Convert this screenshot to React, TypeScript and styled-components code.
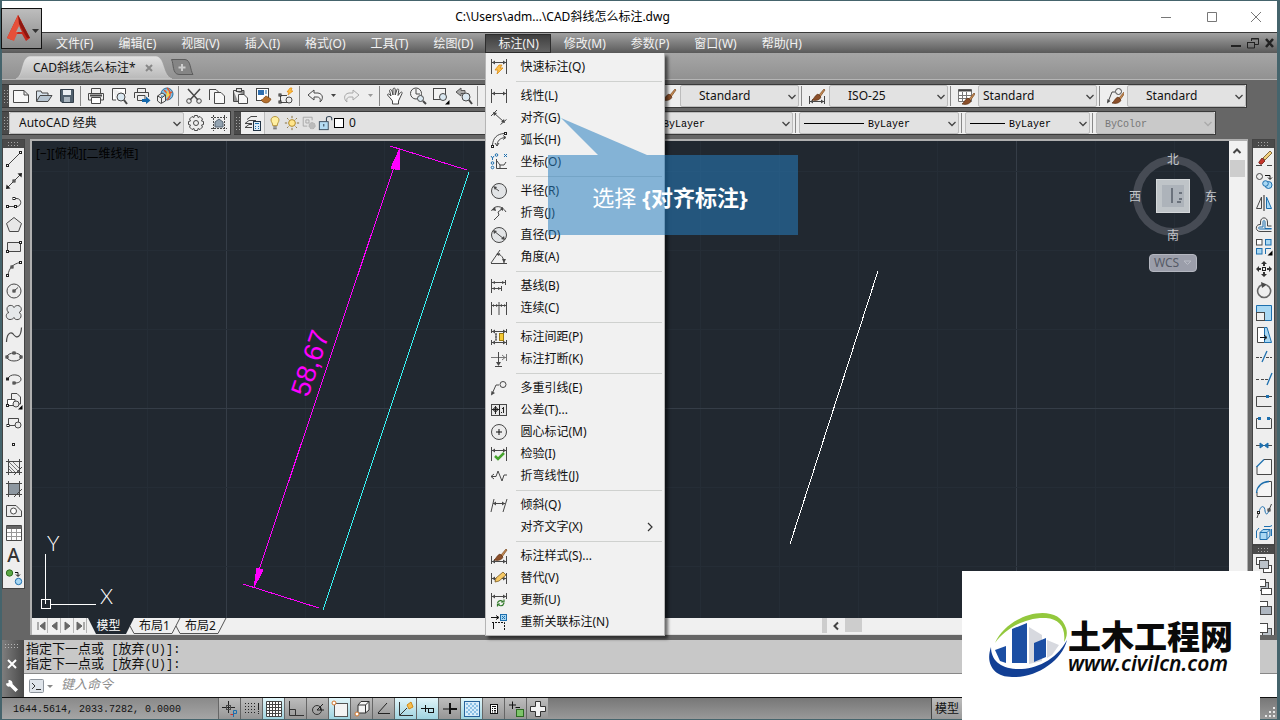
import React from "react";
import type { ReactNode } from "react";
import styled, { createGlobalStyle, css } from "styled-components";

const ui = `"Noto Sans", "Noto Sans CJK SC", sans-serif`;
const mono = `"Liberation Mono", "Noto Sans CJK SC", monospace`;

const GlobalStyle = createGlobalStyle`
  * { box-sizing: border-box; }
  body { margin: 0; background: #666; font: 12px/16px ${ui}; color: #111; }
  button, input, select { font: inherit; color: inherit; margin: 0; }
  button { padding: 0; border: 0; background: none; }
  svg { display: block; flex: none; }
`;

/* ---------- icons ---------- */

const K = "#484848";
const B = "#1d6fae";
const LB = "#a9d8f3";

const Svg = ({ children, size = 18 }: { children: ReactNode; size?: number }) => (
  <svg width={size} height={size} viewBox="0 0 18 18" fill="none" stroke={K} strokeWidth="1" aria-hidden="true">
    {children}
  </svg>
);

const arrows = (y: number, l = 2, r = 16) => (
  <path d={`M${l} ${y}L${l + 3} ${y - 2}V${y + 2}ZM${r} ${y}L${r - 3} ${y - 2}V${y + 2}Z`} fill={K} stroke="none" />
);
const Node = ({ x, y }: { x: number; y: number }) => <rect x={x - 1} y={y - 1} width="2" height="2" fill="#fff" stroke="#222" />;
const Brush = () => (
  <>
    <path d="M11 8L16 2L17 3L12 10Z" fill="#c58a52" stroke="#7a4a22" strokeWidth=".7" />
    <path d="M4 13C6 12 7 8 10 7L13 10C12 13 8 14 4 13Z" fill="#8b4f2a" stroke="#5f3317" strokeWidth=".7" />
  </>
);
const Bolt = () => <path d="M9 7L5 12H8L7 16L13 10H10L12 7Z" fill="#ffc14a" stroke="#d98a12" strokeWidth=".8" />;

const icons: Record<string, ReactNode> = {
  quick: <><path d="M1.500 1V16M16.500 1V16M2 4.500H16" />{arrows(4.5)}<Bolt /></>,
  linear: <><path d="M1.500 2V16M16.500 2V16M2 6.500H16" />{arrows(6.5)}</>,
  aligned: <><path d="M4 4L14 13M1 7L7 1M10.500 15.500L16.500 10.500" /><path d="M3 3L7 4L4 7ZM15 14L11 13L14 10Z" fill={K} stroke="none" /></>,
  arcLen: <><path d="M2.500 14C3 7 7 3 14 2.500M7 15C7 10 10 7 15 6.500M13 4.500L16 6.500L13 8.500M5 12L7 15L9 12" /><Node x={15.5} y={2.5} /><Node x={2.5} y={15.5} /></>,
  ordinate: <><path d="M6.500 6V15.500H17M7 8L10 12H14L16 9M10 12V15" /><g stroke={B}><path d="M1 3L2.500 5L4 3M2.500 5V7M14 1L17 4M17 1L14 4" /><circle cx="6.500" cy="2" r="1.300" /><circle cx="2.500" cy="10" r="1.300" /><circle cx="2.500" cy="14.500" r="1.300" /></g></>,
  radius: <><circle cx="9" cy="9" r="7.500" fill="#e2e4e6" /><path d="M9 9L5 6" /><path d="M3 4L7 5L5 8Z" fill={K} stroke="none" /></>,
  jogged: <><path d="M1.500 7C4 1 12 1 16 8M4 16L9 11L8 8L12 5" /><path d="M13 3L13 7L10 5ZM2 6L5 3L6 7Z" fill={K} stroke="none" /></>,
  diameter: <><circle cx="9" cy="9" r="7.500" fill="#e2e4e6" /><path d="M4 5L14 13" /><path d="M3 4L7 5L4 8ZM15 14L11 13L14 10Z" fill={K} stroke="none" /></>,
  angle: <><path d="M1 15.500H17M1 15L10 2M7 6C11 6 14 10 14 15" /><path d="M6 6L10 5L9 8ZM14 15L12 11H16Z" fill={K} stroke="none" /></>,
  baseline: <><path d="M1.500 2V16M2 5.500H15M2 11.500H11M15.500 3V8M11.500 9V14" /><path d="M2 5.500L5 4V7ZM15 5.500L12 4V7ZM2 11.500L5 10V13ZM11 11.500L8 10V13Z" fill={K} stroke="none" /></>,
  continue: <><path d="M1.500 3V16M9 3V16M16.500 3V16M2 6.500H16" /><path d="M8.500 6.500L6 5V8ZM9.500 6.500L12 5V8ZM2 6.500L4 5V8ZM16 6.500L14 5V8Z" fill={K} stroke="none" /></>,
  spacing: <><path d="M1.500 1V5M16.500 1V5M1.500 12V17M16.500 12V17M2 3.500H16M2 14.500H16" />{arrows(3.5)}{arrows(14.5)}<rect x="9.500" y="5.500" width="4" height="7" fill="#f7c932" stroke="#9b7a10" /><path d="M6 5.500V12M5 6H7M5 9H7M5 12H7" /></>,
  break: <><path d="M1 7.500H16M16.500 4V11" stroke="#777" /><path d="M12 5L15 7.500L12 10" stroke="#777" /><path d="M8.500 2V15M5 16.500H12" /><path d="M8.500 16L6 12H11Z" fill={K} stroke="none" /></>,
  leader: <><path d="M2 15L6 6H9" /><circle cx="13" cy="5.500" r="3" /><path d="M1 16.500L1.500 12L5 14Z" fill={K} stroke="none" /></>,
  tolerance: <><rect x="1.500" y="3.500" width="15" height="11" fill="#e8e8e8" /><path d="M9.500 4V14M5.500 5V13M2 8.500H9M13.500 6V12" stroke="#222" /><circle cx="5.500" cy="8.500" r="2" stroke="#222" /><path d="M11.500 11V12M12 7.500H14" stroke="#222" /></>,
  center: <><circle cx="9" cy="9" r="7.500" fill="#ececec" /><path d="M9 6V12M6 9H12" stroke="#111" /></>,
  inspect: <><path d="M1.500 2V16M16.500 2V16M2 5.500H16" />{arrows(5.5)}<path d="M5 11L8 14L14 8" stroke="#45a32c" strokeWidth="2.500" /></>,
  jogLine: <path d="M1 9.500H6L8 4L12 14L14 8L17 8M4 7L1 9.500L4 12" />,
  oblique: <><path d="M1 16L4 3M13 16L17 3M3 7.500H15" />{arrows(7.5, 3, 15)}</>,
  dimStyle: <><path d="M1.500 9V17M16.500 9V17M2 14.500H16" />{arrows(14.5)}<Brush /></>,
  override: <><path d="M1.500 4V15M16.500 4V15M2 9.500H16" />{arrows(9.5)}<path d="M5 13L6 9L13 3L16 6L9 12Z" fill="#f6c965" stroke="#7a5a20" strokeWidth=".8" /></>,
  update: <><path d="M1.500 2V16M16.500 2V8M2 5.500H16" />{arrows(5.5)}<g stroke="#327a2a" strokeWidth="1.200"><path d="M7.500 12C8 9.500 12 8.500 13 11M14 12C13 15.500 9 15.500 8 13" /><path d="M11 11H14V8.500M10 13H7.500V15.500" /></g></>,
  reassoc: <><path d="M1 4.500H8M6 2.500L9 4.500L6 6.500" stroke="#111" /><rect x="10.500" y="1.500" width="6" height="6" fill={LB} stroke={B} /><path d="M12 3L15 6M15 3L12 6" stroke={B} /><path d="M2 9.500H14.500V17" stroke="#111" strokeDasharray="2 1" /><path d="M3.500 9V16" stroke="#111" /></>,

  new: <path d="M1.500 3.500H12L16.500 8V15.500H1.500ZM12 3.500V8H16.500" fill="#f8f8f8" />,
  open: <><path d="M1.500 14V4H6L7 6H13V8" fill="#d6e1ea" /><path d="M1.500 14.500L5 8.500H17L13 14.500Z" fill="#b6c4d0" /></>,
  save: <><path d="M2.500 2.500H15.500V15.500H4L2.500 14Z" fill="#50606e" stroke="#333f4a" /><rect x="5" y="3" width="8" height="5" fill="#e9eef2" stroke="none" /><rect x="6" y="10" width="6" height="5" fill="#aab6c0" stroke="none" /></>,
  print: <><path d="M4.500 6V1.500H13.500V6M1.500 13V6.500H16.500V13Z" fill="#eee" /><path d="M4.500 10.500H13.500V16.500H4.500Z" fill="#fff" /><path d="M3 8.500H15" strokeWidth="2" /></>,
  preview: <><path d="M2.500 1.500H15.500V7M2.500 1.500V13H6" fill="#fff" /><circle cx="11" cy="10" r="4" fill="#dbe9f2" /><path d="M14 13L17 17" strokeWidth="2" /></>,
  export: <><path d="M4.500 5V1.500H12.500V5M1.500 11V5.500H15.500V10M4.500 8.500H12V13.500H4.500Z" fill="#eee" /><path d="M9 12H13V9.500L17.500 13.500L13 17V15H9Z" fill="#1267ac" stroke="none" /></>,
  globe: <><circle cx="11" cy="7" r="6" fill="#7fc0e8" stroke="#2a6d9b" /><path d="M11 1C15 4 15 10 11 13M8 3L12 7L16 5" stroke="#e2572b" strokeWidth="1.500" /><path d="M11 3L14 8L10 11Z" fill="#f5d24b" stroke="none" /><path d="M1.500 9L6 6L9.500 8V14L5 16.500L1.500 14ZM1.500 9L5.500 11L9.500 8M5.500 11V16" fill="#eee" /></>,
  cut: <><path d="M3 2L13 13M15 2L5 13" strokeWidth="1.500" /><circle cx="4" cy="14" r="2.300" /><circle cx="14" cy="14" r="2.300" /></>,
  copy: <><path d="M1.500 13V2.500H8L11.500 6" fill="#f4f4f4" /><path d="M6.500 5.500H13L16.500 9V16.500H6.500Z" fill="#f8f8f8" /></>,
  paste: <><path d="M2.500 3.500H13V8M2.500 3.500V14.500H7" fill="#8f8f8f" /><rect x="5.500" y="1.500" width="5" height="3" fill="#ddd" /><path d="M7.500 7.500H13L16.500 11V16.500H7.500Z" fill="#f8f8f8" /></>,
  match: <><rect x="2.500" y="1.500" width="12" height="12" fill="#fff" /><rect x="4" y="3" width="6" height="5" fill="#2f6fb0" stroke="none" /><path d="M11 4H13M11 6H13" stroke={B} /><path d="M7 13C9 13 10 10 12 9L17 12C15 17 10 17 7 13Z" fill="#b5702f" stroke="#75410f" strokeWidth=".7" /></>,
  block: <><path d="M3.500 15V8.500H10M3.500 15.500H10" /><circle cx="12" cy="13" r="3" /><Node x={3} y={15} /><Node x={3} y={8} /><path d="M13 1L10 5H12L11 8L16 4H14L15 1Z" fill="#ffbf3d" stroke="#e08a10" strokeWidth=".7" /></>,
  undo: <path d="M2 8L8 3V6H12C18 7 17 13 14 15C15 11 13 10 11 10H8V13Z" fill="#f2f2f2" />,
  redo: <path d="M16 8L10 3V6H6C0 7 1 13 4 15C3 11 5 10 7 10H10V13Z" fill="#eee" stroke="#a8a8a8" />,
  pan: <path d="M5 12L1.500 8C1.500 6.500 3 6.500 5 9L3.500 3.500C4 2 5.500 2.500 6 4L7 8L7 2C7.500 .800 9 .800 9.200 2V8L11 2.500C11.500 1.500 13 2 12.700 3.500L12 8.500L14.500 5.500C15.500 4.500 16.800 5.500 16 6.500L12.500 14V17H6.500V14Z" fill="#fff" />,
  zoom: <><circle cx="7" cy="6.500" r="5.500" fill="#f2f2f2" /><path d="M7 2V7H11" /><circle cx="11.500" cy="11.500" r="3" fill="#dbe9f2" /><path d="M14 14L17 17" strokeWidth="2" /></>,
  zoomWin: <><rect x="1.500" y="1.500" width="12" height="11" fill="#f3f3f3" /><circle cx="11" cy="10" r="3.500" fill="#dbe9f2" /><path d="M17.500 13V17.500H13Z" fill="#000" stroke="none" /></>,
  zoomPrev: <><path d="M1 5L6 1V3.500H10V6.500H6V9Z" fill="#aaa" stroke="#555" /><circle cx="11" cy="10" r="4" fill="#dbe9f2" /><path d="M14 13L17 17" strokeWidth="2" /></>,
  sheet: <><rect x="1.500" y="1.500" width="13" height="14" fill="#fff" /><rect x="3" y="3" width="4" height="4" fill={B} stroke="none" /></>,
  textStyle: <Brush />,
  tableStyle: <><path d="M1.500 2.500H14.500V14.500H1.500ZM1.500 8.500H14M1.500 11.500H14M5.500 5V14M9.500 5V14" fill="#fff" stroke="#777" /><path d="M1.500 3.500H14.500" stroke="#444" strokeWidth="2" /><g transform="translate(1 4)"><Brush /></g></>,
  leaderStyle: <><path d="M2 15L6 5H9" /><circle cx="12.500" cy="4.500" r="3" /><path d="M1 16.500L1.500 12L4.500 14Z" fill={K} stroke="none" /><g transform="translate(2 3)"><Brush /></g></>,
  gear: <><circle cx="9" cy="9" r="2.500" /><path d="M7.500 1.500H10.500L11 3.500L13 2.500L15.500 5L14.500 7L16.500 7.500V10.500L14.500 11L15.500 13L13 15.500L11 14.500L10.500 16.500H7.500L7 14.500L5 15.500L2.500 13L3.500 11L1.500 10.500V7.500L3.500 7L2.500 5L5 2.500L7 3.500Z" /></>,
  workspace: <><path d="M3.500 1V17M14.500 1V17M1 3.500H17M1 14.500H17" strokeDasharray="2 1" /><path d="M5 13V8L9 5L13 8V13Z" fill="#93a3b1" stroke="#566572" /></>,
  layers: <><path d="M3 5.500L7 2.500H13M1 9.500L5 6.500H12M1 13.500L5 10.500H8M1 13.500H8M1 9.500H8" /><rect x="9.500" y="7.500" width="7" height="9" fill="#dcecf7" stroke="#234" /><path d="M11 9.500H15M11 12.500H12M14 12.500H15M11 14.500H12M14 14.500H15" stroke={B} /></>,
  bulb: <><path d="M6.500 12C6.500 9 4.500 8 4.500 5.500C5 .500 13 .500 13.500 5.500C13.500 8 11.500 9 11.500 12Z" fill="#ffefa0" stroke="#ad8a2d" /><path d="M7 13.500H11M7 15.500H11" /></>,
  sun: <><circle cx="9" cy="9" r="3.800" fill="#ffe58a" stroke="#a87e1c" /><path d="M9 1V3.500M9 14.500V17M1 9H3.500M14.500 9H17M3.500 3.500L5 5M13 13L14.500 14.500M14.500 3.500L13 5M5 13L3.500 14.500" stroke="#7c632a" /></>,
  freeze: <><path d="M2.500 2.500H12.500V6M2.500 2.500V12.500H7M5.500 5.500H9V9H5.500Z" stroke="#a3a3a3" /><circle cx="12.500" cy="12" r="3.500" fill="#bbb" stroke="#aaa" strokeDasharray="2 1" /></>,
  lock: <><rect x="1.500" y="7.500" width="10" height="9" fill="#b5dcf3" stroke="#345" /><path d="M9.500 7V4C9.500 1 15.500 1 15.500 4V6M6.500 10V13" stroke="#345" strokeWidth="1.200" /></>,

  line: <><path d="M3 15L15 3" /><Node x={2.5} y={15.5} /><Node x={15.5} y={2.5} /></>,
  xline: <><path d="M3 15L15 3" /><path d="M1 17L1.500 12.500L5.500 16.500ZM17 1L16.500 5.500L12.500 1.500Z" fill="#222" stroke="none" /><Node x={9} y={9} /></>,
  pline: <><path d="M3 12.500H12C17 12 17 5 12 4.500H9" /><Node x={2.5} y={12.5} /><Node x={10.5} y={12.5} /><Node x={9} y={4.5} /></>,
  polygon: <path d="M9 1.500L16.500 7.500L13.500 15.500H4.500L1.500 7.500Z" fill="#e7e7e7" />,
  rect: <><path d="M2.500 4.500H15.500V13.500H2.500Z" fill="#e7e7e7" /><Node x={2.5} y={13.5} /><Node x={15.5} y={4.5} /></>,
  arc: <><path d="M3 15C4 8 8 4 15 2.500" /><Node x={2.5} y={15.5} /><Node x={7} y={7} /><Node x={15.5} y={2.5} /></>,
  circle: <><circle cx="9" cy="9" r="7" fill="#ececec" /><path d="M9 9L13 5.500" /><Node x={9} y={9} /></>,
  cloud: <path d="M9 3.500C8 .500 2 .500 2 5C2 7 3 8 4 8.500C0 9 .500 15.500 5 15.500C7 15.500 8.500 14.500 9 13.500C10 17 16.500 16 16 11.500C16 10 15 9 14 8.500C17.500 7.500 17 1.500 12.500 1.500C11 1.500 9.500 2.500 9 3.500Z" fill="#e5e8ea" />,
  spline: <path d="M1.500 16C2 5 7 6 9 9C12 13 16 11 16.500 1.500" strokeWidth="1.200" />,
  ellipse: <><ellipse cx="9" cy="9" rx="7" ry="4" fill="#ececec" /><Node x={2} y={9} /><Node x={16} y={9} /><Node x={9} y={5} /></>,
  ellArc: <><path d="M3 9C4 3 16 4 16 9C16 12 13 13 10 13" /><Node x={2.5} y={9} /><Node x={9} y={13} /></>,
  insert: <><path d="M6.500 7V1.500H12L15.500 5V12H12" fill="#eee" /><path d="M2.500 13.500V7.500H10V13.500Z" fill="#fff" /><circle cx="11" cy="12" r="3" fill="#e8e8e8" /><Node x={2.5} y={13.5} /><path d="M17.500 13V17.500H13Z" fill="#000" stroke="none" /></>,
  mkBlock: <><path d="M3.500 11.500V4.500H13.500V11.500Z" fill="#eee" /><circle cx="13" cy="11" r="3" fill="#e8e8e8" /><Node x={3} y={11.5} /></>,
  point: <rect x="7.500" y="7.500" width="2" height="2" fill="#fff" stroke="#222" />,
  hatch: <><path d="M3.500 1V17M14.500 1V17M1 3.500H17M1 14.500H17" /><path d="M4 8L10 14M4 4L14 14M8 4L14 10M4 11L7 14" stroke="#777" /><path d="M9 17L17 9" /></>,
  gradient: <><rect x="4" y="4" width="10" height="10" fill="#8d97a0" stroke="none" /><path d="M3.500 1V17M14.500 1V17M1 3.500H17M1 14.500H17M9 17L17 9" /></>,
  region: <><path d="M1.500 3.500H11L16.500 9V14.500H1.500Z" fill="#ececec" /><circle cx="8.500" cy="9" r="3" fill="#fff" /></>,
  table: <><path d="M1.500 1.500H16.500V16.500H1.500Z" fill="#fff" /><path d="M2 8.500H16M2 12.500H16M6.500 5V16M11.500 5V16" stroke="#999" /><path d="M1.500 3.500H16.500" stroke="#666" strokeWidth="3" /></>,
  addSel: <><circle cx="4.500" cy="5" r="3.200" fill="#5aa845" stroke="#2f6e20" /><circle cx="13.500" cy="13.500" r="3.200" fill={LB} stroke={B} /><path d="M10 4.500H13V8M11 6.500L13 8.500L15 6.500" stroke="#111" /></>,

  erase: <><path d="M1 15.500H7M12 15.500H17" /><path d="M8 8L15 1L17 3L10 10Z" fill="#f0cf7c" stroke="#6a4a20" strokeWidth=".8" /><path d="M4 12L7 8L10 11L7 14C6 15 3 13 4 12Z" fill="#c5352b" stroke="#6a1a14" strokeWidth=".8" /></>,
  copyObj: <><circle cx="4.500" cy="4.500" r="3" /><circle cx="13.500" cy="13" r="3.500" fill={LB} stroke={B} /><circle cx="10.500" cy="11.500" r="2.800" fill={LB} stroke={B} /><path d="M10 3.500H15V7M13 5.500L15 7.500L17 5.500" stroke="#111" /></>,
  mirror: <><path d="M6.500 3V14.500H1.500Z" /><path d="M9 1V17" stroke="#222" /><path d="M11.500 3V14.500H16.500Z" fill={LB} stroke={B} /></>,
  offset: <><path d="M16.500 10H12.500V6C12.500 .500 5.500 .500 5.500 6V8.500C0 8 0 15.500 5 15.500H16.500" /><path d="M16.500 12.500H10V6C10 4 8 4 8 6V11H5C3 11 3 13 5 13H16.500" stroke={B} /></>,
  array: <><rect x="1.500" y="1.500" width="5.500" height="5.500" fill="#fff" /><rect x="10.500" y="1.500" width="5.500" height="5.500" fill={LB} stroke={B} /><rect x="1.500" y="10.500" width="5.500" height="5.500" fill={LB} stroke={B} /><path d="M10.500 16V10.500H16" stroke={B} /><path d="M17.500 12.500V17.500H12.500Z" fill="#000" stroke="none" /></>,
  move: <><rect x="7.500" y="7.500" width="3" height="3" stroke="#222" /><path d="M9 1L12 4H10V6H8V4H6ZM9 17L12 14H10V12H8V14H6ZM1 9L4 6V8H6V10H4V12ZM17 9L14 6V8H12V10H14V12Z" fill="#333" stroke="none" /></>,
  rotate: <><path d="M7 2.800A6.500 6.500 0 1 0 11.500 2.900" strokeWidth="1.600" stroke="#666" /><path d="M6 0L12 2.500L7 6Z" fill={K} stroke="none" /></>,
  scale: <><path d="M1.500 1.500H16.500V16.500H1.500Z" fill={LB} stroke={B} /><rect x="1.500" y="8.500" width="8" height="8" fill="#f0f0f0" /></>,
  stretch: <><path d="M2.500 1.500H9.500V16.500H2.500Z" fill="#fff" /><path d="M9.500 1.500H12L16.500 16.500H9.500Z" fill={LB} stroke={B} /><path d="M5 11.500H11M9 9L12 11.500L9 14" stroke="#111" /></>,
  trim: <><path d="M7 14L12 3" stroke={B} strokeWidth="1.300" /><path d="M1 9.500H7M11 9.500H17" strokeDasharray="3 1" /></>,
  extend: <><path d="M12 15L17 3" stroke={B} strokeWidth="1.300" /><path d="M1 9.500H5M6 9.500H13" strokeDasharray="3 1" /></>,
  breakPt: <><path d="M16.500 14.500H1.500V4.500H12" /><rect x="11" y="3" width="3" height="3" fill={B} stroke="none" /><path d="M14 4.500H17" /></>,
  breakObj: <><path d="M1.500 4.500V14.500H16.500V4.500M1.500 4.500H4M14 4.500H16" /><path d="M3 3H6V6H3ZM12 3H15V6H12Z" fill={B} stroke="none" /></>,
  join: <><path d="M1 9.500H17" /><path d="M8.500 9.500L5 7V12ZM9.500 9.500L13 7V12Z" fill={B} stroke={B} /></>,
  chamfer: <><path d="M2 8V16.500H16.500V1.500H9" fill="#f5f5f5" /><path d="M1.500 9L9 1.500" stroke={B} strokeWidth="1.300" /></>,
  fillet: <><path d="M2 12V16.500H16.500V1.500H13" fill="#f5f5f5" /><path d="M1.500 13C2 6 7 2 14 1.500" stroke={B} strokeWidth="1.300" /></>,
  blend: <><path d="M2 16L4 10M14 8L16.500 2" /><path d="M4 10C6 2 10 4 10 9C11 14 13 12 14 8" stroke={B} /><Node x={3.5} y={10.5} /><Node x={14} y={8} /></>,
  explode: <><path d="M5 8.500H12V15.500H5ZM5 8.500L8 5.500H15L12 8.500M15 5.500V12L12 15.500" fill={LB} stroke={B} /><path d="M1.500 14V7L4 4M9 2.500H15L17 1.500M16.500 5V12" stroke={B} /></>,
  front: <><rect x="1.500" y="1.500" width="9" height="7" fill="#fff" /><rect x="8.500" y="9.500" width="8" height="7" fill="#fff" /><rect x="4.500" y="4.500" width="9" height="8" fill="#bcc3ca" /></>,
  back: <><rect x="4.500" y="4.500" width="9" height="8" fill="#bcc3ca" /><rect x="1.500" y="1.500" width="9" height="7" fill="#fff" /><rect x="6.500" y="10.500" width="10" height="6" fill="#fff" /></>,
  above: <><rect x="4.500" y="1.500" width="8" height="6" fill="#fff" /><rect x="5.500" y="6.500" width="11" height="8" fill="#aeb6c0" /></>,
  under: <><rect x="7.500" y="6.500" width="9" height="9" fill="#bcc3ca" /><rect x="3.500" y="1.500" width="9" height="9" fill="#fff" /></>,

  infer: <><path d="M7.500 1V13M1 7.500H14" stroke="#222" /><rect x="5.500" y="5.500" width="4" height="4" /><path d="M12.500 17V10.500H15.500V13.500H12" stroke={B} /><path d="M9.500 14.500H12" stroke="#c33" /></>,
  snap: <><path d="M2 3.500H13M2 6.500H13M2 9.500H13M2 12.500H13" stroke="#222" strokeDasharray="1 2" /><path d="M15.500 3V14" stroke="#222" strokeDasharray="7 1 1 1" /></>,
  grid: <path d="M1.500 1.500H16.500V16.500H1.500ZM4.500 1V17M7.500 1V17M10.500 1V17M13.500 1V17M1 4.500H17M1 7.500H17M1 10.500H17M1 13.500H17" fill="#fff" stroke="#444" />,
  ortho: <path d="M2.500 1V15.500H17M3 9.500H8.500V15" stroke="#333" />,
  polar: <><circle cx="8" cy="10" r="4.500" stroke="#333" /><path d="M8 10L14 4M8 10H15M11.500 7V10" stroke="#222" /></>,
  osnap: <><rect x="3.500" y="3.500" width="13" height="13" fill="#f3f3f3" stroke="#555" /><circle cx="3" cy="3" r="2" fill="#fff" stroke="#d5762a" /></>,
  osnap3d: <><path d="M5 5L8 1.500H16V10L12.500 13H5ZM5 5H12.500V13M12.500 5L16 1.500" fill="#f3f3f3" stroke="#333" /><circle cx="4" cy="14" r="2" fill="#fff" stroke="#d5762a" /></>,
  otrack: <path d="M3 13.500H15M3 13L12 3" stroke="#222" />,
  ducs: <><path d="M2.500 2V15.500H16M3 15L10 8" stroke="#333" /><path d="M10 5L14 2L16 7L12 9Z" fill="#f7bd4d" stroke="#d38a15" /></>,
  dyn: <><path d="M2 8.500H9M6.500 5V12" stroke="#111" /><rect x="9.500" y="8.500" width="5" height="4" stroke="#111" /></>,
  lwt: <><path d="M2 9H9" stroke="#111" /><path d="M9 9H16M9 3V14" stroke="#111" strokeWidth="2" /></>,
  tpy: <><rect x="1.500" y="1.500" width="15" height="15" fill="#d8ecfa" stroke="#27629b" /><path d="M3 4H15M3 8H15M3 12H15" stroke="#8cc0e6" strokeWidth="2" strokeDasharray="2 2" /><path d="M5 6H15M5 10H15M5 14H15" stroke="#8cc0e6" strokeWidth="2" strokeDasharray="2 2" /></>,
  qp: <><rect x="5.500" y="4.500" width="7" height="9" fill="#fff" stroke="#111" /><path d="M7 6.500H11M7 8.500H8M9 8.500H11M7 10.500H8M9 10.500H11M7 12H8M9 12H11" stroke="#111" /></>,
  sc: <><path d="M2 5H9M5.500 1.500V9M8.500 7.500H13" stroke="#111" /><rect x="9.500" y="9.500" width="7" height="7" fill="#7dc36a" stroke="#2d6a22" /></>,
  plus: <path d="M6.500 1.500H11.500V6.500H16.500V11.500H11.500V16.500H6.500V11.500H1.500V6.500H6.500Z" fill="#f2f2f2" stroke="#333" />,
};

const Icon = ({ name, size }: { name: string; size?: number }) => <Svg size={size}>{icons[name]}</Svg>;

const Chevron = ({ color = "#444" }: { color?: string }) => (
  <svg width="10" height="8" viewBox="0 0 10 8" fill="none" stroke={color} strokeWidth="1.300" aria-hidden="true">
    <path d="M1.500 2L5 5.500L8.500 2" />
  </svg>
);

/* ---------- window frame ---------- */

const Window = styled.div`
  position: relative;
  display: flex;
  flex-direction: column;
  min-height: 100vh;
  border: solid #45646c;
  border-width: 1px 3px 1px 2px;
  background: #666;
`;
const TitleBar = styled.header`
  position: relative;
  display: flex;
  align-items: center;
  justify-content: flex-end;
  height: 31px;
  background: #fff;
`;
const Title = styled.h1`
  flex: 1;
  margin: 0;
  padding-right: 20px;
  font: 12px/16px ${ui};
  text-align: center;
  color: #000;
`;
const WindowButton = styled.button`
  display: grid;
  place-items: center;
  width: 46px;
  height: 30px;
  &:last-child { width: 42px; }
`;
const AppButton = styled.button`
  position: absolute;
  z-index: 4;
  left: -1px;
  top: 7px;
  display: flex;
  align-items: center;
  width: 41px;
  height: 41px;
  padding-left: 5px;
  border: 1px solid #111;
  background: linear-gradient(#bdbdbd, #8a8a8a);
`;
const MenuBar = styled.nav`
  position: relative;
  display: flex;
  height: 21px;
  padding-left: 41px;
  border-top: 1px solid #3a3a3a;
  background: linear-gradient(#a2a2a2, #5a5a5a);
`;
const MenuSlot = styled.div`
  position: relative;
`;
const MenuButton = styled.button<{ $open?: boolean }>`
  height: 19px;
  margin-top: 1px;
  padding: 0 12px 0 13px;
  line-height: 16px;
  color: #f2f2f2;
  ${p => p.$open && css`
    background: linear-gradient(#3d3d3d, #666);
    box-shadow: inset 0 0 0 1px #2d2d2d;
  `}
`;
const MdiButtons = styled.div`
  display: flex;
  gap: 5px;
  align-items: center;
  margin-left: auto;
  padding-right: 1px;
`;

/* ---------- drop-down menu ---------- */

const Popup = styled.div`
  position: absolute;
  z-index: 5;
  left: 0;
  top: 20px;
  width: 180px;
  padding: 3px 0 2px;
  border: solid #b5b5b5;
  border-width: 0 1px 1px;
  background: #f1f1f1;
  box-shadow: 3px 3px 3px rgba(0, 0, 0, 0.55);
`;
const MenuItem = styled.button`
  display: flex;
  align-items: center;
  width: 100%;
  height: 22px;
  padding: 0 8px 0 4px;
  text-align: left;
  color: #111;
  svg + span { margin-left: 12px; }
`;
const ItemLabel = styled.span`
  flex: 1;
`;
const MenuRule = styled.hr`
  height: 1px;
  margin: 3px 2px 3px 30px;
  border: 0;
  background: #cfd1cf;
`;

/* ---------- file tabs and toolbars ---------- */

const TabStrip = styled.div`
  display: flex;
  align-items: flex-end;
  height: 27px;
  margin-bottom: 4px;
  padding-left: 14px;
  border-bottom: 1px solid #b5b5b5;
  background: linear-gradient(#a6a6a6, #919191);
`;
const FileTab = styled.div`
  position: relative;
  display: flex;
  align-items: center;
  gap: 9px;
  width: 154px;
  height: 23px;
  padding-left: 17px;
  svg { position: relative; }
  > svg:first-child { position: absolute; left: 0; top: 0; }
  span { position: relative; }
`;
const Bars = styled.div`
  display: flex;
  flex-direction: column;
  gap: 3px;
  padding-right: 30px;
  margin-bottom: 4px;
`;
const BarRow = styled.div<{ $end?: number }>`
  display: flex;
  gap: 3px;
  padding-right: ${p => p.$end ?? 0}px;
`;
const Toolbar = styled.div<{ $grow?: boolean }>`
  display: flex;
  align-items: stretch;
  height: 24px;
  border: solid #3a3a3a;
  border-width: 1px 1px 1px 0;
  background: #eee;
  flex: ${p => (p.$grow ? "1 1 0" : "none")};
  min-width: 0;
`;
const Grip = styled.span<{ $across?: boolean }>`
  flex: none;
  width: ${p => (p.$across ? "auto" : "7px")};
  height: ${p => (p.$across ? "8px" : "auto")};
  border: ${p => (p.$across ? "2px solid #4a4a4a" : "solid #4a4a4a")};
  border-width: ${p => (p.$across ? "1px 4px" : "4px 1px")};
  background: #4a4a4a radial-gradient(circle, #a5a5a5 1px, transparent 1px) 0 0 / 3px 3px;
`;
const Tool = styled.button<{ $w?: number }>`
  display: grid;
  place-items: center;
  flex: none;
  width: ${p => p.$w ?? 23}px;
  min-height: 22px;
`;
const Divider = styled.span`
  flex: none;
  width: 1px;
  margin: 1px 3px 1px 2px;
  background: #888;
`;
const Spring = styled.span`
  flex: 1;
`;
const ComboBox = styled.label<{ $w: number; $disabled?: boolean }>`
  position: relative;
  flex: none;
  display: flex;
  width: ${p => p.$w}px;
  border: 1px solid #bcbcbc;
  border-radius: 2px;
  background: ${p => (p.$disabled ? "#c9c9c9" : "#e2e2e2")};
  > svg { position: absolute; right: 1px; top: 7px; pointer-events: none; }
`;
const Select = styled.select<{ $pad: number; $mono?: boolean }>`
  appearance: none;
  width: 100%;
  padding: 0 14px 0 ${p => p.$pad}px;
  border: 0;
  background: none;
  color: #111;
  opacity: 1;
  ${p => p.$mono && css`padding-top: 3px; font: 10px/16px ${mono}; color: #000;`}
  &:disabled { color: #777; opacity: 1; }
`;
const LineSample = styled.span<{ $w: number }>`
  position: absolute;
  left: 4px;
  top: 10px;
  width: ${p => p.$w}px;
  height: 1px;
  background: #000;
`;
const LayerBox = styled.div`
  display: flex;
  align-items: center;
  flex: 1;
  padding-left: 1px;
  border-left: 1px solid #bcbcbc;
  background: #e2e2e2;
`;
const LayerState = styled.button`
  width: 17px;
  height: 20px;
  display: grid;
  place-items: center;
`;
const ColorSwatch = styled.span`
  width: 10px;
  height: 10px;
  margin-right: 5px;
  border: 1px solid #000;
  background: #fff;
`;

/* ---------- workspace ---------- */

const Workspace = styled.main`
  display: flex;
  flex: 1;
  gap: 4px;
  padding: 0 2px 5px 0;
`;
const Dock = styled.div<{ $gap?: number }>`
  display: flex;
  flex-direction: column;
  flex: none;
  width: 23px;
  margin-right: ${p => p.$gap ?? 0}px;
`;
const Palette = styled.div<{ $fill?: boolean }>`
  display: flex;
  flex-direction: column;
  align-items: center;
  border: 1px solid #444;
  background: #eee;
  overflow: hidden;
  ${p => p.$fill && css`flex: 1 1 0; min-height: 0; border-bottom: 0;`}
  ${Grip} { align-self: stretch; }
`;
const Drawing = styled.section`
  display: flex;
  flex-direction: column;
  flex: 1;
  min-width: 0;
  border: solid #b0b0b0;
  border-width: 2px 1px 0 2px;
  background: #f0f0f0;
`;
const ViewRow = styled.div`
  display: flex;
  flex: 1;
`;
const Canvas = styled.div`
  position: relative;
  flex: 1;
  background: #212830;
  overflow: hidden;
`;
const Scene = styled.svg`
  position: absolute;
  inset: 0;
  width: 100%;
  height: 100%;
`;
const ViewLabel = styled.span`
  position: absolute;
  left: 4px;
  top: 5px;
  color: #000;
`;
const Compass = styled.div`
  position: absolute;
  right: 10px;
  top: 8px;
  display: flex;
  flex-direction: column;
  align-items: center;
  gap: 11px;
`;
const WcsButton = styled.button`
  display: flex;
  align-items: center;
  gap: 4px;
  height: 18px;
  padding: 0 4px;
  border: 1px solid #b4b7c0;
  border-radius: 4px;
  background: #9b9eaa;
  color: #555a66;
  line-height: 14px;
`;
const VScroll = styled.div`
  flex: none;
  width: 18px;
  display: flex;
  flex-direction: column;
  background: #f1f1f1;
  button { height: 19px; display: grid; place-items: center; width: 16px; }
`;
const Thumb = styled.span<{ $w: number; $h: number }>`
  width: ${p => p.$w}px;
  height: ${p => p.$h}px;
  margin-left: 1px;
  background: #cdcdcd;
`;
const SheetRow = styled.div`
  display: flex;
  height: 17px;
  padding-bottom: 1px;
  padding-left: 3px;
  border-bottom: 1px solid #ddd;
`;
const SheetNav = styled.button`
  display: grid;
  place-items: center;
  width: 13px;
  border-right: 1px solid #b5b5b5;
`;
const SheetTab = styled.button<{ $active?: boolean }>`
  position: relative;
  width: 46px;
  padding-right: 3px;
  line-height: 14px;
  color: ${p => (p.$active ? "#fff" : "#111")};
  svg { position: absolute; left: 0; top: 0; overflow: visible; }
  span { position: relative; }
`;
const HScroll = styled.div`
  display: flex;
  width: 425px;
  margin-left: auto;
  border-left: 5px solid #cdcdcd;
  button { width: 17px; display: grid; place-items: center; }
`;

/* ---------- callout ---------- */

const Callout = styled.aside`
  position: absolute;
  z-index: 6;
  left: 546px;
  top: 154px;
  width: 250px;
  height: 80px;
  display: flex;
  align-items: center;
  justify-content: center;
  gap: 6px;
  padding: 4px 6px 0 0;
  background: rgba(38, 126, 190, 0.54);
  color: #fff;
  font-size: 22px;
  line-height: 30px;
  svg { position: absolute; left: 0; bottom: 100%; }
`;

/* ---------- command line and status ---------- */

const CommandArea = styled.section`
  display: flex;
  height: 57px;
  background: #c8c8c8;
`;
const CommandSide = styled.div`
  display: flex;
  flex-direction: column;
  align-items: center;
  gap: 7px;
  width: 22px;
  padding: 3px 2px 0 0;
  background: linear-gradient(90deg, #7e7e7e, #4a4a4a);
  button { display: grid; place-items: center; width: 18px; height: 15px; }
`;
const SideDots = styled.span`
  width: 16px;
  height: 6px;
  background: radial-gradient(circle, #b5b5b5 1px, transparent 1px) 0 0 / 3px 3px;
`;
const CommandMain = styled.div`
  flex: 1;
  display: flex;
  flex-direction: column;
`;
const History = styled.div`
  flex: 1;
  padding: 0 2px;
  border-bottom: 1px solid #888;
  font: 13px/15px "Noto Sans CJK SC", sans-serif;
  p { margin: 0; height: 15px; white-space: pre; }
  code { font: 12px/15px ${mono}; }
`;
const Prompt = styled.label`
  display: flex;
  align-items: center;
  gap: 4px;
  height: 23px;
  padding-left: 5px;
  background: #fff;
`;
const PromptInput = styled.input`
  flex: 1;
  padding: 0 0 3px 0;
  border: 0;
  outline: 0;
  background: none;
  font: italic 13px/16px ${ui};
  &::placeholder { color: #8d8d8d; opacity: 1; }
`;
const StatusBar = styled.footer`
  display: flex;
  height: 22px;
  border-top: 1px solid #111;
  background: linear-gradient(#777, #999);
`;
const Coordinates = styled.output`
  width: 216px;
  padding-left: 11px;
  font: 10px/23px ${mono};
  background: linear-gradient(#8a8a8a, #a5a5a5);
`;
const Toggle = styled.button<{ $on?: boolean }>`
  display: grid;
  place-items: center;
  width: 22px;
  border-left: 1px solid #666;
  background: ${p => (p.$on ? "linear-gradient(#e2f5f9, #9fd3df)" : "linear-gradient(#bdbdbd, #969696)")};
`;
const ModelButton = styled.button`
  width: 31px;
  border-left: 1px solid #444;
  background: linear-gradient(#bdbdbd, #999);
`;
const Tray = styled.div`
  display: flex;
  align-items: flex-end;
  justify-content: flex-end;
  width: 315px;
  border-left: 1px solid #444;
`;

/* ---------- watermark ---------- */

const Watermark = styled.aside`
  position: absolute;
  z-index: 7;
  right: 17px;
  bottom: -1px;
  display: flex;
  align-items: center;
  width: 298px;
  height: 149px;
  padding-left: 24px;
  background: #fff;
`;
const Brand = styled.div`
  margin-left: -2px;
  color: #0a0a0a;
  white-space: nowrap;
  font-style: italic;
  strong { display: block; font: 900 33px/34px "Noto Sans CJK SC", sans-serif; }
  span { display: block; font-weight: 600; font-size: 21px; line-height: 22px; }
`;

/* ---------- data ---------- */

const menusBefore = ["文件(F)", "编辑(E)", "视图(V)", "插入(I)", "格式(O)", "工具(T)", "绘图(D)"];
const menusAfter = ["修改(M)", "参数(P)", "窗口(W)", "帮助(H)"];

const dimensionMenu: [string, string][][] = [
  [["quick", "快速标注(Q)"]],
  [["linear", "线性(L)"], ["aligned", "对齐(G)"], ["arcLen", "弧长(H)"], ["ordinate", "坐标(O)"]],
  [["radius", "半径(R)"], ["jogged", "折弯(J)"], ["diameter", "直径(D)"], ["angle", "角度(A)"]],
  [["baseline", "基线(B)"], ["continue", "连续(C)"]],
  [["spacing", "标注间距(P)"], ["break", "标注打断(K)"]],
  [["leader", "多重引线(E)"], ["tolerance", "公差(T)..."], ["center", "圆心标记(M)"], ["inspect", "检验(I)"], ["jogLine", "折弯线性(J)"]],
  [["oblique", "倾斜(Q)"], ["", "对齐文字(X)"]],
  [["dimStyle", "标注样式(S)..."], ["override", "替代(V)"], ["update", "更新(U)"], ["reassoc", "重新关联标注(N)"]],
];

const drawTools = ["line", "xline", "pline", "polygon", "rect", "arc", "circle", "cloud", "spline", "ellipse", "ellArc", "insert", "mkBlock", "point", "hatch", "gradient", "region", "table", "text", "addSel"];
const modifyTools = ["erase", "copyObj", "mirror", "offset", "array", "move", "rotate", "scale", "stretch", "trim", "extend", "breakPt", "breakObj", "join", "chamfer", "fillet", "blend", "explode"];
const orderTools = ["front", "back", "above", "under"];
const toggles = ["infer", "snap", "grid", "ortho", "polar", "osnap", "osnap3d", "otrack", "ducs", "dyn", "lwt", "tpy", "qp", "sc", "plus"];
const activeToggles = ["grid", "osnap", "ducs", "dyn", "tpy"];

const BigA = styled.span`
  font-size: 19px;
  line-height: 22px;
  font-weight: 500;
  color: #333;
`;

function Combo({ label, value, width, pad, line, disabled, monoText }: {
  label: string; value: string; width: number; pad: number; line?: number; disabled?: boolean; monoText?: boolean;
}) {
  return (
    <ComboBox $w={width} $disabled={disabled}>
      {line ? <LineSample $w={line} /> : null}
      <Select aria-label={label} $pad={pad} $mono={monoText} disabled={disabled} defaultValue={value}>
        <option>{value}</option>
      </Select>
      <Chevron color={disabled ? "#aaa" : "#444"} />
    </ComboBox>
  );
}

const Tools = ({ names }: { names: string[] }) => (
  <>{names.map(n => <Tool key={n} aria-label={n}><Icon name={n} /></Tool>)}</>
);

const Caret = ({ dim }: { dim?: boolean }) => (
  <Tool $w={14} aria-label="more">
    <svg width="7" height="4" viewBox="0 0 7 4" aria-hidden="true"><path d="M1 0H6L3.500 3Z" fill={dim ? "#999" : "#444"} /></svg>
  </Tool>
);

function DimensionMenu() {
  return (
    <Popup role="menu">
      {dimensionMenu.map((group, i) => (
        <React.Fragment key={i}>
          {i > 0 && <MenuRule />}
          {group.map(([icon, label]) => (
            <MenuItem key={label} role="menuitem">
              <Icon name={icon} />
              <ItemLabel>{label}</ItemLabel>
              {!icon && (
                <svg width="12" height="10" viewBox="0 0 12 10" fill="none" stroke="#333" strokeWidth="1.200" aria-hidden="true"><path d="M4 1L8 5L4 9" /></svg>
              )}
            </MenuItem>
          ))}
        </React.Fragment>
      ))}
    </Popup>
  );
}

function DrawingScene() {
  const minorX = Array.from({ length: 16 }, (_, i) => 36 + i * 79);
  const minorY = [30, 109, 188, 267, 346, 425];
  return (
    <Scene aria-hidden="true">
      <g fill="#252d36">
        {minorX.map((x, i) => <rect key={x} x={x} width="1" height="100%" fill={i % 5 === 2 ? "#353d47" : undefined} />)}
        {minorY.map(y => <rect key={y} y={y} height="1" width="100%" fill={y === 267 ? "#353d47" : undefined} />)}
      </g>
      <g stroke="#ff00ff" fill="none" shapeRendering="crispEdges">
        <path d="M358 5L435 29M211 443L287 467M364 20L226 432" />
        <path d="M368 7L359 27L367 29ZM222 446L225 427L231 429Z" fill="#ff00ff" />
      </g>
      <path d="M437 31L291 469" stroke="#37f4f4" shapeRendering="crispEdges" />
      <path d="M846 130L758 403" stroke="#fff" shapeRendering="crispEdges" />
      <text transform="translate(276 257) rotate(-71.500)" fontFamily="Liberation Sans" fontSize="27" fill="#ff00ff">58,67</text>
      <g stroke="#fff" fill="none" shapeRendering="crispEdges">
        <path d="M13.500 413V463M18 463.500H64M9.500 458.500H18.500V467.500H9.500Z" />
      </g>
      <g fill="#fff" fontFamily="Lato" fontWeight="300" fontSize="21">
        <text x="15" y="410">Y</text>
        <text x="68" y="463">X</text>
      </g>
    </Scene>
  );
}

function NavCube() {
  return (
    <Compass>
      <svg width="92" height="94" viewBox="0 0 92 94" aria-hidden="true">
        <circle cx="46" cy="47" r="36" fill="none" stroke="#464b54" strokeWidth="8" />
        <rect x="29.500" y="30.500" width="33" height="33" fill="#bfc4c8" stroke="#d5d8da" />
        <rect x="35" y="36" width="22" height="22" fill="#adb3ba" />
        <path d="M45 39V54M52 44H55M52 50H55M50 53H54" stroke="#555d68" strokeWidth="1.500" />
        <g fill="#c3c6ca" fontSize="12" textAnchor="middle" fontFamily="Noto Sans CJK SC">
          <text x="46" y="15">北</text>
          <text x="46" y="91">南</text>
          <text x="8" y="52">西</text>
          <text x="84" y="52">东</text>
        </g>
      </svg>
      <WcsButton>
        WCS
        <svg width="9" height="6" viewBox="0 0 9 6" fill="none" stroke="#b9bcc5" aria-hidden="true"><path d="M1 1H8L4.500 4.500Z" /></svg>
      </WcsButton>
    </Compass>
  );
}

const navGlyphs = ["M3 3V11M10 3L5 7L10 11Z", "M9 3L4 7L9 11Z", "M4 3L9 7L4 11Z", "M3 3L8 7L3 11ZM10 3V11"];

export default function App() {
  return (
    <>
      <GlobalStyle />
      <Window>
        <TitleBar>
          <AppButton aria-label="应用程序菜单">
            <svg width="34" height="34" viewBox="0 0 34 34" aria-hidden="true">
              <path d="M11 3L23 26L19 29L15 22H9L5 28L0 26Z" fill="#c3271c" />
              <path d="M11 3L15 10L7 29L0 26Z" fill="#e5503a" />
              <path d="M11 3L23 26L20 26L12 12Z" fill="#8d1710" />
              <path d="M12 14L15 20H9Z" fill="#a9aaaa" />
              <path d="M25 17H32L28.500 21Z" fill="#333" />
            </svg>
          </AppButton>
          <Title>C:\Users\adm...\CAD斜线怎么标注.dwg</Title>
          {["M0 5.500H10", "M.500 .500H9.500V9.500H.500Z", "M0 0L10 10M10 0L0 10"].map((d, i) => (
            <WindowButton key={d} aria-label={["最小化", "最大化", "关闭"][i]}>
              <svg width="10" height="10" viewBox="0 0 10 10" fill="none" stroke="#777" aria-hidden="true"><path d={d} /></svg>
            </WindowButton>
          ))}
        </TitleBar>

        <MenuBar>
          {menusBefore.map(m => <MenuButton key={m}>{m}</MenuButton>)}
          <MenuSlot>
            <MenuButton $open>标注(N)</MenuButton>
            <DimensionMenu />
          </MenuSlot>
          {menusAfter.map(m => <MenuButton key={m}>{m}</MenuButton>)}
          <MdiButtons>
            <button aria-label="最小化图形"><svg width="12" height="12" viewBox="0 0 12 12" aria-hidden="true"><path d="M1 8H11V10H1Z" fill="#222" /></svg></button>
            <button aria-label="还原图形"><svg width="12" height="12" viewBox="0 0 12 12" fill="none" stroke="#222" aria-hidden="true"><path d="M4.500 4V1.500H11.500V7.500H8M4 2H12" /><path d="M.500 5.500H7.500V11H.500ZM0 5.500H8" /></svg></button>
            <button aria-label="关闭图形"><svg width="12" height="12" viewBox="0 0 12 12" fill="none" stroke="#222" strokeWidth="2.500" aria-hidden="true"><path d="M2 2L9 10M9 2L2 10" /></svg></button>
          </MdiButtons>
        </MenuBar>

        <TabStrip>
          <FileTab>
            <svg width="156" height="23" viewBox="0 0 156 23" aria-hidden="true">
              <defs><linearGradient id="tab" x2="0" y2="1"><stop stopColor="#e2e2e2" /><stop offset="1" stopColor="#b8b8b8" /></linearGradient></defs>
              <path d="M0 23C8 20 5 1 14 .500H140C149 1 146 20 156 23Z" fill="url(#tab)" stroke="#ddd" strokeWidth=".500" />
            </svg>
            <span>CAD斜线怎么标注*</span>
            <svg width="8" height="8" viewBox="0 0 8 8" stroke="#888" strokeWidth="2" aria-hidden="true"><path d="M1 1L7 7M7 1L1 7" /></svg>
          </FileTab>
          <button aria-label="新建选项卡">
            <svg width="26" height="21" viewBox="0 0 26 21" aria-hidden="true">
              <path d="M1.500 1.500H15C21 2 20 12 23 16.500H9C2 16 4 6 1.500 1.500Z" fill="#858585" stroke="#5c5c5c" />
              <path d="M12 6V13M8.500 9.500H15.500" stroke="#ccc" strokeWidth="2" />
            </svg>
          </button>
        </TabStrip>

        <Bars>
          <BarRow>
            <Toolbar $grow>
              <Grip />
              <Tools names={["new", "open", "save"]} />
              <Divider />
              <Tools names={["print", "preview", "export", "globe"]} />
              <Divider />
              <Tools names={["cut", "copy", "paste", "match", "block"]} />
              <Divider />
              <Tools names={["undo"]} /><Caret /><Tools names={["redo"]} /><Caret dim />
              <Divider />
              <Tools names={["pan", "zoom", "zoomWin", "zoomPrev"]} />
              <Divider />
              <Tools names={["sheet"]} />
              <Spring />
              <Tool $w={24} aria-label="文字样式"><Icon name="textStyle" /></Tool>
              <Combo label="文字样式" value="Standard" width={119} pad={18} />
              <Divider />
              <Tool $w={24} aria-label="标注样式"><Icon name="dimStyle" /></Tool>
              <Combo label="标注样式" value="ISO-25" width={119} pad={18} />
              <Divider />
              <Tool $w={24} aria-label="表格样式"><Icon name="tableStyle" /></Tool>
              <Combo label="表格样式" value="Standard" width={119} pad={4} />
              <Divider />
              <Tool $w={24} aria-label="多重引线样式"><Icon name="leaderStyle" /></Tool>
              <Combo label="多重引线样式" value="Standard" width={119} pad={18} />
            </Toolbar>
          </BarRow>
          <BarRow $end={31}>
            <Toolbar>
              <Grip />
              <Combo label="工作空间" value="AutoCAD 经典" width={175} pad={9} />
              <Tools names={["gear", "workspace"]} />
            </Toolbar>
            <Toolbar $grow>
              <Grip />
              <Tools names={["layers"]} />
              <LayerBox>
                {["bulb", "sun", "freeze", "lock"].map(n => <LayerState key={n} aria-label={n}><Icon name={n} size={16} /></LayerState>)}
                <ColorSwatch />0
              </LayerBox>
              <Combo label="颜色" value="ByLayer" width={167} pad={36} monoText />
              <Divider />
              <Combo label="线型" value="ByLayer" width={160} pad={68} line={60} monoText />
              <Divider />
              <Combo label="线宽" value="ByLayer" width={125} pad={43} line={35} monoText />
              <Divider />
              <Combo label="打印样式" value="ByColor" width={119} pad={8} disabled monoText />
            </Toolbar>
          </BarRow>
        </Bars>

        <Workspace>
          <Dock $gap={1}>
            <Palette>
              <Grip $across />
              {drawTools.map(n => <Tool key={n} aria-label={n}>{n === "text" ? <BigA>A</BigA> : <Icon name={n} />}</Tool>)}
            </Palette>
          </Dock>

          <Drawing>
            <ViewRow>
              <Canvas>
                <DrawingScene />
                <ViewLabel>[−][俯视][二维线框]</ViewLabel>
                <NavCube />
              </Canvas>
              <VScroll>
                <button aria-label="向上滚动">
                  <svg width="10" height="8" viewBox="0 0 10 8" fill="none" stroke="#444" strokeWidth="2" aria-hidden="true"><path d="M1.500 6L5 2.500L8.500 6" /></svg>
                </button>
                <Thumb $w={15} $h={17} />
              </VScroll>
            </ViewRow>
            <SheetRow>
              {navGlyphs.map((d, i) => (
                <SheetNav key={d} aria-label={["首个", "上一个", "下一个", "末个"][i]}>
                  <svg width="13" height="14" viewBox="0 0 13 14" fill="#666" stroke="#666" aria-hidden="true"><path d={d} /></svg>
                </SheetNav>
              ))}
              <SheetTab $active>
                <svg width="46" height="16" viewBox="0 0 46 16" aria-hidden="true"><path d="M1 0H47L39 16H9Z" fill="#212830" /></svg>
                <span>模型</span>
              </SheetTab>
              {["布局1", "布局2"].map(s => (
                <SheetTab key={s}>
                  <svg width="46" height="16" viewBox="0 0 46 16" fill="none" stroke="#555" aria-hidden="true"><path d="M-3 8L1 15.500H39L47 0" /></svg>
                  <span>{s}</span>
                </SheetTab>
              ))}
              <HScroll>
                <button aria-label="向左滚动">
                  <svg width="8" height="10" viewBox="0 0 8 10" fill="none" stroke="#444" strokeWidth="2" aria-hidden="true"><path d="M6 1.500L2.500 5L6 8.500" /></svg>
                </button>
                <Thumb $w={17} $h={14} />
              </HScroll>
            </SheetRow>
          </Drawing>

          <Dock>
            <Palette>
              <Grip $across />
              <Tools names={modifyTools} />
            </Palette>
            <Palette $fill>
              <Grip $across />
              <Tools names={orderTools} />
            </Palette>
          </Dock>
        </Workspace>

        <CommandArea>
          <CommandSide>
            <SideDots />
            <button aria-label="关闭命令行"><svg width="10" height="10" viewBox="0 0 10 10" stroke="#fff" strokeWidth="2" aria-hidden="true"><path d="M1 1L9 9M9 1L1 9" /></svg></button>
            <button aria-label="自定义">
              <svg width="14" height="14" viewBox="0 0 14 14" aria-hidden="true">
                <path d="M3.500 1L3.500 4L1 4.500C1 7 3 8 5 7.500L10.500 13L13 10.500L7.500 5C8 3 6 .500 3.500 1Z" fill="#fff" />
              </svg>
            </button>
          </CommandSide>
          <CommandMain>
            <History>
              <p>指定下一点或<code> [</code>放弃<code>(U)]:</code></p>
              <p>指定下一点或<code> [</code>放弃<code>(U)]:</code></p>
            </History>
            <Prompt>
              <svg width="28" height="16" viewBox="0 0 28 16" fill="none" aria-hidden="true">
                <rect x=".500" y="1.500" width="14" height="13" rx="1" fill="#dfe4ea" stroke="#8d949c" />
                <path d="M3 5L6 8L3 11M7 11.500H12" stroke="#333" />
                <path d="M18 7H24L21 10Z" fill="#888" />
              </svg>
              <PromptInput aria-label="命令" placeholder="键入命令" />
            </Prompt>
          </CommandMain>
        </CommandArea>

        <StatusBar>
          <Coordinates>1644.5614, 2033.7282, 0.0000</Coordinates>
          {toggles.map(n => (
            <Toggle key={n} $on={activeToggles.includes(n)} aria-label={n} aria-pressed={activeToggles.includes(n)}><Icon name={n} /></Toggle>
          ))}
          <Spring />
          <ModelButton>模型</ModelButton>
          <Tray>
            <svg width="14" height="14" viewBox="0 0 14 14" fill="#e8e8e8" aria-hidden="true">
              <path d="M10 2H12V4H10ZM6 6H8V8H6ZM10 6H12V8H10ZM2 10H4V12H2ZM6 10H8V12H6ZM10 10H12V12H10Z" />
            </svg>
          </Tray>
        </StatusBar>

        <Callout>
          <svg width="110" height="37" viewBox="0 0 110 37" aria-hidden="true">
            <path d="M13 0L99 37H50Z" fill="rgb(38,126,190)" fillOpacity=".54" />
          </svg>
          <span>选择</span>
          <strong>{"{对齐标注}"}</strong>
        </Callout>

        <Watermark>
          <svg width="84" height="70" viewBox="0 0 84 70" aria-hidden="true">
            <path d="M9 32C22 2 72 -10 80 17C82 23 80 28 78 31C80 16 73 8 60 7C40 6 20 17 9 32Z" fill="#93c83d" />
            <path d="M5 36C-1 53 8 66 26 66C50 67 76 50 81 29C69 51 47 59 30 58C14 57 5 49 5 36Z" fill="#123f94" />
            <path d="M43 16L56 24V50L43 53ZM61 29L73 34L66 44L61 47Z" fill="#d7d9df" />
            <path d="M26 18L41 12V52H26Z" fill="#1b4ea3" />
            <path d="M9 39L20 35V52L14 50Z" fill="#1b4ea3" />
            <path d="M48 32L60 27V46L48 51Z" fill="#1b4ea3" />
          </svg>
          <Brand>
            <strong>土木工程网</strong>
            <span>www.civilcn.com</span>
          </Brand>
        </Watermark>
      </Window>
    </>
  );
}
